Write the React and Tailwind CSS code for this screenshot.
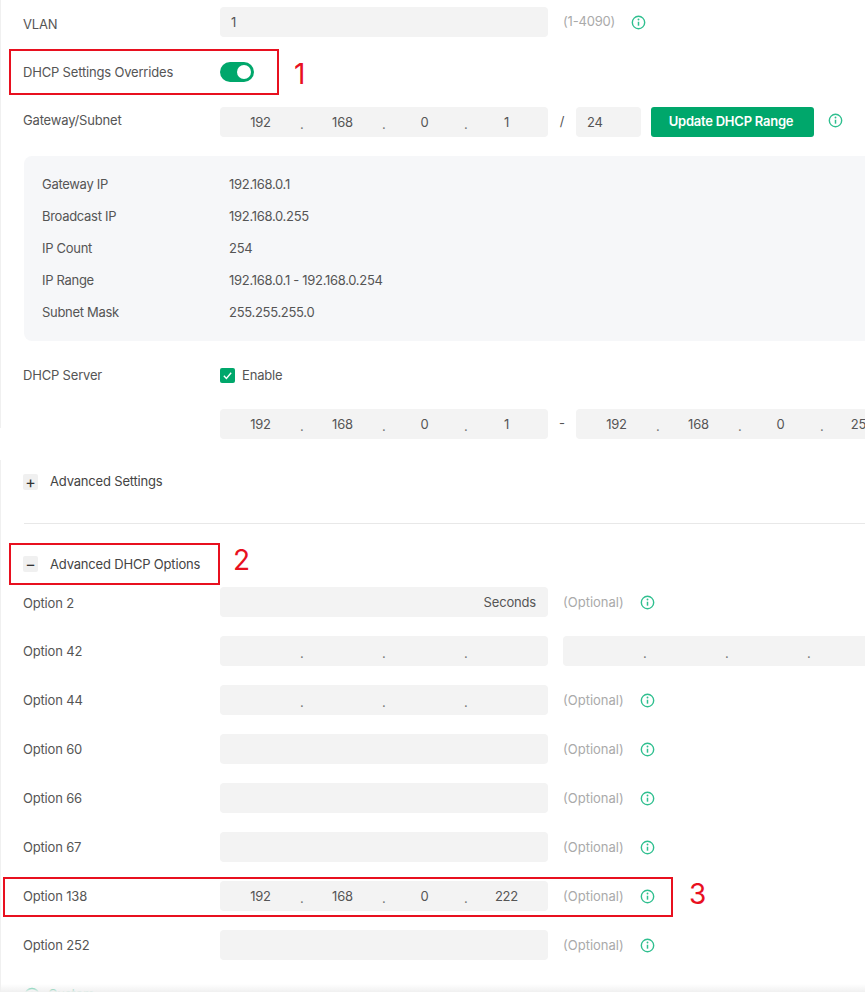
import React from 'react';

const InfoIcon = () => (
  <svg viewBox="0 0 16 16" className="h-[15px] w-[15px] shrink-0" fill="none" stroke="#2fbf8f" strokeWidth="1.5">
    <circle cx="8" cy="8" r="6.6" />
    <path d="M8 7.2v4.2" strokeWidth="1.6" />
    <circle cx="8" cy="4.8" r="1" fill="#2fbf8f" stroke="none" />
  </svg>
);

const PlusCircle = () => (
  <svg viewBox="0 0 16 16" className="h-[16px] w-[16px] shrink-0" fill="none" stroke="#2fbf8f" strokeWidth="1.5">
    <circle cx="8" cy="8" r="6.6" />
    <path d="M8 4.8v6.4M4.8 8h6.4" />
  </svg>
);

const Field = ({ children, className = 'w-[328px]' }) => (
  <div className={`flex h-[30px] shrink-0 items-center rounded-[4px] bg-[#f3f3f3] text-[13px] text-[#555555] ${className}`}>
    {children}
  </div>
);

const IpField = ({ parts = ['', '', '', ''] }) => (
  <Field>
    {parts.map((part, i) => (
      <React.Fragment key={i}>
        <span className="w-[81px] shrink-0 pt-[2px] text-center">{part}</span>
        {i < 3 && <span className="w-px shrink-0 -translate-x-px translate-y-[3px] text-center text-[#777777]">.</span>}
      </React.Fragment>
    ))}
  </Field>
);

const Row = ({ label, children, className = '', labelClass = 'pt-[2px]' }) => (
  <div className={`flex items-center ${className}`}>
    <div className={`w-[197px] shrink-0 text-[13px] text-[#555555] ${labelClass}`}>{label}</div>
    {children}
  </div>
);

const Hint = ({ text = '(Optional)', textClass = 'pt-[2px] tracking-normal' }) => (
  <>
    <span className={`ml-[15px] text-[13px] text-[#aaaaaa] ${textClass}`}>{text}</span>
    <span className="ml-4"><InfoIcon /></span>
  </>
);

const Expander = ({ sign, label, className = '' }) => (
  <div className={`flex items-center ${className}`}>
    <span className="flex h-[16px] w-[15px] items-center justify-center rounded-[2px] bg-[#f0f0f0] text-[16px] leading-none text-[#333333]">{sign}</span>
    <span className="ml-3 text-[13px] text-[#444444]">{label}</span>
  </div>
);

const summary = [
  ['Gateway IP', '192.168.0.1'],
  ['Broadcast IP', '192.168.0.255'],
  ['IP Count', '254'],
  ['IP Range', '192.168.0.1 - 192.168.0.254'],
  ['Subnet Mask', '255.255.255.0'],
];

const options = [
  { label: 'Option 60' },
  { label: 'Option 66' },
  { label: 'Option 67' },
];

export default function App() {
  return (
    <div className="relative h-[992px] w-[865px] overflow-hidden bg-white pl-[23px] pt-[7px] font-['Inter',sans-serif] tracking-[-0.18px]">
      <Row label="VLAN" labelClass="pt-[6px]">
        <Field><span className="pl-[11px] pt-[2px]">1</span></Field>
        <Hint text="(1-4090)" textClass="" />
      </Row>

      <Row label="DHCP Settings Overrides" className="mt-[25px] h-[20px]">
        <span className="flex h-[20px] w-[34px] items-center justify-end rounded-full bg-[#00a76b] pr-[3px]">
          <span className="h-[14px] w-[14px] rounded-full bg-white" />
        </span>
      </Row>

      <Row label="Gateway/Subnet" className="mt-[25px]" labelClass="pb-[2px]">
        <IpField parts={['192', '168', '0', '1']} />
        <span className="w-[28px] shrink-0 text-center text-[13px] text-[#555555]">/</span>
        <Field className="w-[65px]"><span className="pl-[11px] pt-[2px]">24</span></Field>
        <button className="ml-[10px] h-[30px] w-[163px] rounded-[3px] bg-[#00a76b] pr-[3px] text-[13px] font-semibold tracking-[-0.25px] text-white">Update DHCP Range</button>
        <span className="ml-[14px] -translate-y-[2px]"><InfoIcon /></span>
      </Row>

      <div className="ml-px mt-[19px] h-[185px] w-[900px] rounded-lg bg-[#f6f7f9] pl-[18px] pt-[13px] tracking-[-0.3px]">
        {summary.map(([k, v]) => (
          <div key={k} className="flex h-[32px] items-center text-[13px] text-[#555555]">
            <span className="w-[187px] shrink-0">{k}</span>
            <span>{v}</span>
          </div>
        ))}
      </div>

      <Row label="DHCP Server" className="mt-[24px] h-[20px]">
        <span className="flex h-[15px] w-[15px] items-center justify-center rounded-[2px] bg-[#00a76b]">
          <svg viewBox="0 0 12 12" className="h-[11px] w-[11px]" fill="none" stroke="white" strokeWidth="1.5">
            <path d="M2 6.2l2.8 3L10 3" />
          </svg>
        </span>
        <span className="ml-[7px] pt-[2px] text-[13px] text-[#555555]">Enable</span>
      </Row>

      <div className="mt-[24px] flex items-center pl-[197px]">
        <IpField parts={['192', '168', '0', '1']} />
        <span className="w-[28px] shrink-0 text-center text-[13px] text-[#555555]">-</span>
        <IpField parts={['192', '168', '0', '254']} />
      </div>

      <Expander sign="+" label="Advanced Settings" className="mt-[33px]" />
      <div className="ml-px mt-[31px] h-px w-[900px] bg-[#e8e8e8]" />
      <Expander sign="−" label="Advanced DHCP Options" className="mt-[31px]" />

      <Row label="Option 2" className="mt-[13px]" labelClass="pt-[4px]">
        <Field className="w-[328px] justify-end pr-3 pt-[2px]">Seconds</Field>
        <Hint />
      </Row>
      <Row label="Option 42" className="mt-[19px]">
        <IpField />
        <span className="w-[15px] shrink-0" />
        <IpField />
      </Row>
      <Row label="Option 44" className="mt-[19px]">
        <IpField />
        <Hint />
      </Row>
      {options.map((o) => (
        <Row key={o.label} label={o.label} className="mt-[19px]">
          <Field />
          <Hint />
        </Row>
      ))}
      <Row label="Option 138" className="mt-[19px]">
        <IpField parts={['192', '168', '0', '222']} />
        <Hint />
      </Row>
      <Row label="Option 252" className="mt-[19px]">
        <Field />
        <Hint />
      </Row>

      <div className="ml-px mt-[25px] flex items-center text-[13px] text-[#00a76b]">
        <PlusCircle />
        <span className="ml-2">Custom</span>
      </div>

      {/* seam lines and fade left by the screenshot */}
      <div className="absolute left-0 top-0 h-[428px] w-px bg-[#f0f0f0]" />
      <div className="absolute left-0 top-[460px] h-[532px] w-px bg-[#f0f0f0]" />
      <div className="absolute bottom-0 left-0 h-[8px] w-full bg-gradient-to-b from-transparent to-[#f0f0f0]" />

      {/* red annotations drawn over the screenshot */}
      <div className="absolute left-[9px] top-[49px] h-[46px] w-[270px] border-2 border-[#e8101f]" />
      <span className="absolute left-[294px] top-[56px] text-[28px] leading-9 text-[#e8101f]">1</span>
      <div className="absolute left-[9px] top-[543px] h-[42px] w-[211px] border-2 border-[#e8101f]" />
      <span className="absolute left-[233px] top-[542px] text-[28px] leading-9 text-[#e8101f]">2</span>
      <div className="absolute left-[3px] top-[877px] h-[40px] w-[670px] border-2 border-[#e8101f]" />
      <span className="absolute left-[689px] top-[876px] text-[28px] leading-9 text-[#e8101f]">3</span>
    </div>
  );
}
